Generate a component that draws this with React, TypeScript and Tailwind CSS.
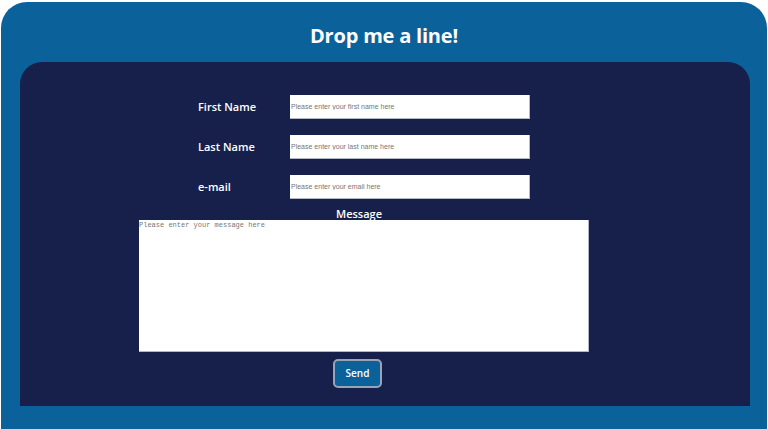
export default function App() {
  const rows = [
    { label: 'First Name', placeholder: 'Please enter your first name here' },
    { label: 'Last Name', placeholder: 'Please enter your last name here' },
    { label: 'e-mail', placeholder: 'Please enter your email here' },
  ];

  return (
    <div className="w-[768px] h-[429px] bg-white pt-[2px] pl-[1px] font-['Open_Sans',sans-serif]">
      <div className="w-[766px] h-[427px] bg-[#0b629b] rounded-t-[26px] pl-[19px] pr-[17px] flex flex-col">
        {/* Titre */}
        <div className="h-[60px] flex items-center justify-center">
          <h1 className="text-white text-[20px] font-bold tracking-[-0.2px] ml-[-2px] mt-[8px]">Drop me a line!</h1>
        </div>

        {/* Formulaire */}
        <div className="h-[344px] bg-[#16204b] rounded-t-[22px] pt-[33px]">
          <div className="flex flex-col gap-[16px]">
            {rows.map((row) => (
              <div key={row.label} className="flex items-center h-[24px]">
                <label className="ml-[178px] w-[92px] text-white text-[11px] font-semibold">{row.label}</label>
                <input
                  type="text"
                  placeholder={row.placeholder}
                  className="w-[240px] h-[24px] bg-white border-b-[1.5px] border-r-[1.5px] border-[#b4b8c6] px-[1px] text-[7px] font-['Liberation_Sans',sans-serif] placeholder:text-[#777] outline-none"
                />
              </div>
            ))}
          </div>

          <div className="ml-[119px] w-[450px] mt-[8px]">
            <div className="text-center text-white text-[11px] font-semibold leading-[13px] pr-[10px]">Message</div>
            <textarea
              placeholder="Please enter your message here"
              className="block w-[450px] h-[132px] bg-white border-b-[1.5px] border-r-[1.5px] border-[#b4b8c6] resize-none text-[7px] leading-[9px] pt-[1px] font-['Liberation_Mono',monospace] placeholder:text-[#777] outline-none"
            />
            <div className="flex justify-center pr-[13px] mt-[7px]">
              <button className="w-[49px] h-[29px] rounded-[5px] bg-[#0b629b] border-2 border-[#98a3b8] text-white text-[10px] font-semibold">
                Send
              </button>
            </div>
          </div>
        </div>
      </div>
    </div>
  );
}
